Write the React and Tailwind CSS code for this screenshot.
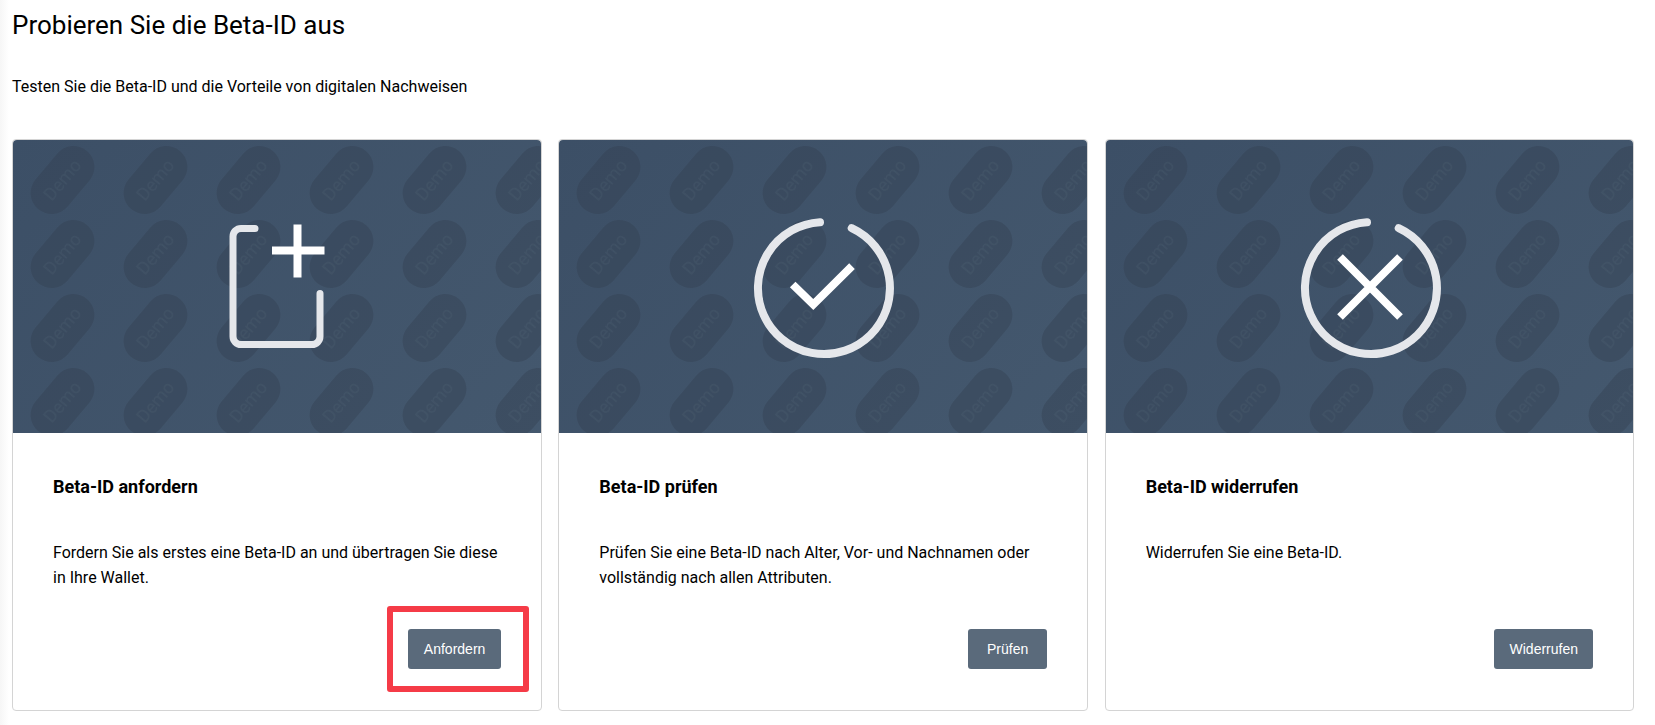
const cards = [
  {
    title: "Beta-ID anfordern",
    text: "Fordern Sie als erstes eine Beta-ID an und übertragen Sie diese in Ihre Wallet.",
    button: "Anfordern",
    icon: "add",
  },
  {
    title: "Beta-ID prüfen",
    text: "Prüfen Sie eine Beta-ID nach Alter, Vor- und Nachnamen oder vollständig nach allen Attributen.",
    button: "Prüfen",
    icon: "check",
  },
  {
    title: "Beta-ID widerrufen",
    text: "Widerrufen Sie eine Beta-ID.",
    button: "Widerrufen",
    icon: "revoke",
  },
];

const DemoPattern = ({ id }) => (
  <svg className="absolute inset-0 h-full w-full" aria-hidden="true">
    <defs>
      <pattern id={id} x="3" y="3" width="93" height="74" patternUnits="userSpaceOnUse">
        <g transform="translate(46.5 37) rotate(-50)">
          <rect x="-38" y="-21" width="76" height="42" rx="21" fill="#323f50" fillOpacity="0.4" />
          <text
            textAnchor="middle"
            y="6"
            fontSize="18"
            fill="#64768a"
            fillOpacity="0.14"
            fontFamily="Roboto, sans-serif"
          >
            Demo
          </text>
        </g>
      </pattern>
    </defs>
    <rect width="100%" height="100%" fill={`url(#${id})`} />
  </svg>
);

const Ring = ({ d }) => (
  <path d={d} fill="none" stroke="#e5e7eb" strokeWidth="8" strokeLinecap="round" />
);

const CardIcon = ({ type }) => (
  <svg viewBox="0 0 160 160" className="relative h-40 w-40" fill="none">
    {type === "add" && (
      <>
        <path
          d="M58 21.5H44a8 8 0 0 0-8 8V129.5a8 8 0 0 0 8 8H115a8 8 0 0 0 8-8V86.5"
          stroke="#e5e7eb"
          strokeWidth="7"
          strokeLinecap="round"
        />
        <path d="M75 43.5H127.5M100.5 17.5V70.5" stroke="#fff" strokeWidth="8" />
      </>
    )}
    {type === "check" && (
      <>
        <Ring d="M108.7 21.2A66 66 0 1 1 77 15.2" />
        <path d="M49.7 77.5L70.3 97.5L109 59.2" stroke="#fff" strokeWidth="8" />
      </>
    )}
    {type === "revoke" && (
      <>
        <Ring d="M108.7 21.2A66 66 0 1 1 77 15.2" />
        <path d="M50 50L110 110M110 50L50 110" stroke="#fff" strokeWidth="8" />
      </>
    )}
  </svg>
);

export default function App() {
  return (
    <div className="min-h-screen bg-[linear-gradient(90deg,#f6f6f6,#ffffff_9px)] pl-3 pr-[20.5px] pb-4 font-['Roboto',sans-serif] text-black">
      <h1 className="pt-[11px] text-[26px] leading-7 font-normal">Probieren Sie die Beta-ID aus</h1>
      <p className="mt-[36px] text-base leading-6">
        Testen Sie die Beta-ID und die Vorteile von digitalen Nachweisen
      </p>

      <div className="mt-10 grid grid-cols-3 gap-[16.5px]">
        {cards.map((card, i) => (
          <div
            key={card.title}
            className="relative flex flex-col rounded border border-[#d4d4d4] bg-white"
          >
            <div className="relative flex h-[293px] items-center justify-center overflow-hidden rounded-t bg-[linear-gradient(135deg,#3c4f66,#44586e)]">
              <DemoPattern id={`demo-${i}`} />
              <CardIcon type={card.icon} />
            </div>
            <div className="flex flex-1 flex-col px-10 pt-[42px] pb-[41px]">
              <h2 className="text-lg leading-6 font-bold">{card.title}</h2>
              <p className="mt-[41px] mb-[39px] text-base leading-[25px]">{card.text}</p>
              <button className="mt-auto h-10 min-w-[79px] self-end rounded-[3px] bg-[#5a6a7b] px-[15.5px] font-['Liberation_Sans',sans-serif] text-sm text-white">
                {card.button}
              </button>
            </div>
            {i === 0 && (
              <div className="absolute right-[12px] bottom-[18px] h-[86px] w-[142px] rounded-[3px] border-[6px] border-[#f53b47]" />
            )}
          </div>
        ))}
      </div>
    </div>
  );
}
